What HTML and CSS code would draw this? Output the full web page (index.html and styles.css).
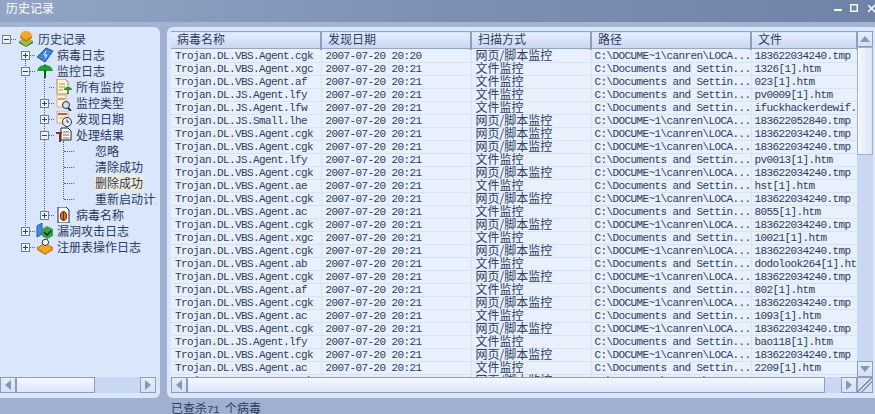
FILE: index.html
```html
<!DOCTYPE html>
<html>
  <head>
    <meta charset="utf-8" />
    <title>历史记录</title>
    <link rel="stylesheet" href="styles.css">
  </head>
  <body>
    <div class="window">
      <div class="titlebar">
        <span class="title">历史记录</span>
        <div class="win-buttons">
          <svg width="8" height="12" viewBox="0 0 8 12"><rect y="8" width="8" height="2" fill="#f4f7fc"/></svg>
          <svg width="8" height="12" viewBox="0 0 8 12"><rect x="0.75" y="3.75" width="6.5" height="6.5" fill="none" stroke="#f4f7fc" stroke-width="1.5"/></svg>
          <svg width="7" height="12" viewBox="0 0 7 12"><path d="M0 4l7 7M7 4l-7 7" stroke="#f4f7fc" stroke-width="1.6"/></svg>
        </div>
      </div>
      <div class="band"></div>
      <div class="main">
        <div class="tree-panel">
          <div class="tree">
            <i class="guide guide-a"></i>
            <i class="guide guide-b"></i>
            <i class="guide guide-c"></i>
            <div class="node"><i class="box minus"></i><i class="dots"></i>
              <svg class="ico" width="18" height="16" viewBox="0 0 18 16"><path d="M2 10l7-4 7 4-7 5z" fill="#8fc24c"/><path d="M2 10v2l7 4 7-4v-2l-7 5z" fill="#3f7a2a"/><path d="M3 5c0-3 3-5 6-5s6 2 6 5l-6 5z" fill="#f5a623"/><path d="M3 5v2l6 4 6-4V5l-6 4z" fill="#d9701a"/></svg>
              <span>历史记录</span></div>
            <div class="node lv1"><i class="box plus"></i><i class="dots"></i>
              <svg class="ico" width="18" height="16" viewBox="0 0 18 16"><path d="M1 10L10 1l7 3-8 11z" fill="#3f86d8" stroke="#1d5aa8"/><path d="M10 4L8 8h3l-2 3" fill="none" stroke="#fff"/></svg>
              <span>病毒日志</span></div>
            <div class="node lv1"><i class="box minus"></i><i class="dots"></i>
              <svg class="ico" width="18" height="16" viewBox="0 0 18 16"><path d="M1 8c1-4 4-6 8-6s7 2 8 6z" fill="#17a02a"/><path d="M9 1v2" stroke="#0a5a12"/><path d="M9 7v8" stroke="#0a5a12" stroke-width="2"/></svg>
              <span>监控日志</span></div>
            <div class="node lv2"><i class="nobox"></i><i class="dots"></i>
              <svg class="ico" width="18" height="16" viewBox="0 0 18 16"><path d="M2 0h8l3 3v12H2z" fill="#fff4d8" stroke="#b08840"/><path d="M4 5h6M4 8h6M4 11h4" stroke="#c08a30"/><path d="M9 11a4 3 0 0 1 8 0z" fill="#17a02a"/><path d="M13 11v4" stroke="#0a5a12"/></svg>
              <span>所有监控</span></div>
            <div class="node lv2"><i class="box plus"></i><i class="dots"></i>
              <svg class="ico" width="18" height="16" viewBox="0 0 18 16"><path d="M2 0h9v12H2z" fill="#fff4e0" stroke="#d8b080"/><path d="M3 4h7" stroke="#e89a50" stroke-width="2"/><circle cx="11" cy="10" r="3.500" fill="#cfe2f6" stroke="#234"/><path d="M13 13l3 3" stroke="#234" stroke-width="2"/></svg>
              <span>监控类型</span></div>
            <div class="node lv2"><i class="box plus"></i><i class="dots"></i>
              <svg class="ico" width="18" height="16" viewBox="0 0 18 16"><path d="M2 0h11v12H2z" fill="#fff4e0" stroke="#d8a080"/><path d="M3 3h9" stroke="#e0503a" stroke-width="2"/><path d="M4 7h7" stroke="#e89a50"/><circle cx="12" cy="11" r="4.500" fill="#e8eef8" stroke="#234"/><path d="M12 8.500V11h2" fill="none" stroke="#234"/></svg>
              <span>发现日期</span></div>
            <div class="node lv2"><i class="box minus"></i><i class="dots"></i>
              <svg class="ico" width="18" height="16" viewBox="0 0 18 16"><path d="M6 1h7l3 3v9H6z" fill="#fff" stroke="#223"/><path d="M8 5h6" stroke="#2a6ad0"/><path d="M8 8h6" stroke="#d03030"/><path d="M8 11h6" stroke="#2a9a40"/><path d="M1 6h6" stroke="#c02020" stroke-width="2"/><path d="M5 5v10" stroke="#803030" stroke-width="2"/></svg>
              <span>处理结果</span></div>
            <div class="node leaf"><i class="dots long"></i><span>忽略</span></div>
            <div class="node leaf"><i class="dots long"></i><span>清除成功</span></div>
            <div class="node leaf"><i class="dots long"></i><span class="selected">删除成功</span></div>
            <div class="node leaf"><i class="dots long"></i><span class="cut">重新启动计划</span></div>
            <div class="node lv2"><i class="box plus"></i><i class="dots"></i>
              <svg class="ico" width="18" height="16" viewBox="0 0 18 16"><path d="M3 0h8l3 3v13H3z" fill="#fff" stroke="#223"/><ellipse cx="8.500" cy="9" rx="3" ry="4.500" fill="#d8761a" stroke="#702010"/><path d="M8.500 5v8" stroke="#702010"/></svg>
              <span>病毒名称</span></div>
            <div class="node lv1"><i class="box plus"></i><i class="dots"></i>
              <svg class="ico" width="18" height="16" viewBox="0 0 18 16"><path d="M1 3l5-3v11l-5 3z" fill="#3f90d8" stroke="#1d5aa8"/><path d="M6 6l5-3 6 3v7l-6 3-5-3z" fill="#3aa048"/><path d="M8 9l3 3 4-4" fill="none" stroke="#123" stroke-width="1.500"/></svg>
              <span>漏洞攻击日志</span></div>
            <div class="node lv1"><i class="box plus"></i><i class="dots"></i>
              <svg class="ico" width="18" height="16" viewBox="0 0 18 16"><path d="M1 9l8-5 8 5-8 6z" fill="#f2a81e" stroke="#a86a10"/><path d="M1 9v2l8 5 8-5V9l-8 6z" fill="#d8861a"/><path d="M7 1l4-1 2 4-4 3-3-3z" fill="#fff" stroke="#334"/></svg>
              <span>注册表操作日志</span></div>
          </div>
          <div class="hscroll tree-hscroll">
            <span class="sb-btn"><i class="arrow-left"></i></span>
            <span class="sb-thumb tree-thumb"></span>
            <span class="sb-track"></span>
            <span class="sb-btn"><i class="arrow-right"></i></span>
          </div>
        </div>
        <div class="list-side">
          <div class="list-panel">
            <div class="list-body">
              <div class="list-view">
                <table class="grid">
                  <colgroup>
                    <col class="c1"><col class="c2"><col class="c3"><col class="c4"><col class="c5">
                  </colgroup>
                  <thead>
                    <tr><th>病毒名称</th><th>发现日期</th><th>扫描方式</th><th>路径</th><th>文件</th></tr>
                  </thead>
                  <tbody>
                    <tr><td>Trojan.DL.VBS.Agent.cgk</td><td>2007-07-20 20:20</td><td>网页/脚本监控</td><td>C:\DOCUME~1\canren\LOCA...</td><td>183622034240.tmp</td></tr>
                    <tr><td>Trojan.DL.VBS.Agent.xgc</td><td>2007-07-20 20:21</td><td>文件监控</td><td>C:\Documents and Settin...</td><td>1326[1].htm</td></tr>
                    <tr><td>Trojan.DL.VBS.Agent.af</td><td>2007-07-20 20:21</td><td>文件监控</td><td>C:\Documents and Settin...</td><td>023[1].htm</td></tr>
                    <tr><td>Trojan.DL.JS.Agent.lfy</td><td>2007-07-20 20:21</td><td>文件监控</td><td>C:\Documents and Settin...</td><td>pv0009[1].htm</td></tr>
                    <tr><td>Trojan.DL.JS.Agent.lfw</td><td>2007-07-20 20:21</td><td>文件监控</td><td>C:\Documents and Settin...</td><td>ifuckhackerdewif.</td></tr>
                    <tr><td>Trojan.DL.JS.Small.lhe</td><td>2007-07-20 20:21</td><td>网页/脚本监控</td><td>C:\DOCUME~1\canren\LOCA...</td><td>183622052840.tmp</td></tr>
                    <tr><td>Trojan.DL.VBS.Agent.cgk</td><td>2007-07-20 20:21</td><td>网页/脚本监控</td><td>C:\DOCUME~1\canren\LOCA...</td><td>183622034240.tmp</td></tr>
                    <tr><td>Trojan.DL.VBS.Agent.cgk</td><td>2007-07-20 20:21</td><td>网页/脚本监控</td><td>C:\DOCUME~1\canren\LOCA...</td><td>183622034240.tmp</td></tr>
                    <tr><td>Trojan.DL.JS.Agent.lfy</td><td>2007-07-20 20:21</td><td>文件监控</td><td>C:\Documents and Settin...</td><td>pv0013[1].htm</td></tr>
                    <tr><td>Trojan.DL.VBS.Agent.cgk</td><td>2007-07-20 20:21</td><td>网页/脚本监控</td><td>C:\DOCUME~1\canren\LOCA...</td><td>183622034240.tmp</td></tr>
                    <tr><td>Trojan.DL.VBS.Agent.ae</td><td>2007-07-20 20:21</td><td>文件监控</td><td>C:\Documents and Settin...</td><td>hst[1].htm</td></tr>
                    <tr><td>Trojan.DL.VBS.Agent.cgk</td><td>2007-07-20 20:21</td><td>网页/脚本监控</td><td>C:\DOCUME~1\canren\LOCA...</td><td>183622034240.tmp</td></tr>
                    <tr><td>Trojan.DL.VBS.Agent.ac</td><td>2007-07-20 20:21</td><td>文件监控</td><td>C:\Documents and Settin...</td><td>8055[1].htm</td></tr>
                    <tr><td>Trojan.DL.VBS.Agent.cgk</td><td>2007-07-20 20:21</td><td>网页/脚本监控</td><td>C:\DOCUME~1\canren\LOCA...</td><td>183622034240.tmp</td></tr>
                    <tr><td>Trojan.DL.VBS.Agent.xgc</td><td>2007-07-20 20:21</td><td>文件监控</td><td>C:\Documents and Settin...</td><td>10021[1].htm</td></tr>
                    <tr><td>Trojan.DL.VBS.Agent.cgk</td><td>2007-07-20 20:21</td><td>网页/脚本监控</td><td>C:\DOCUME~1\canren\LOCA...</td><td>183622034240.tmp</td></tr>
                    <tr><td>Trojan.DL.VBS.Agent.ab</td><td>2007-07-20 20:21</td><td>文件监控</td><td>C:\Documents and Settin...</td><td>dodolook264[1].ht</td></tr>
                    <tr><td>Trojan.DL.VBS.Agent.cgk</td><td>2007-07-20 20:21</td><td>网页/脚本监控</td><td>C:\DOCUME~1\canren\LOCA...</td><td>183622034240.tmp</td></tr>
                    <tr><td>Trojan.DL.VBS.Agent.af</td><td>2007-07-20 20:21</td><td>文件监控</td><td>C:\Documents and Settin...</td><td>802[1].htm</td></tr>
                    <tr><td>Trojan.DL.VBS.Agent.cgk</td><td>2007-07-20 20:21</td><td>网页/脚本监控</td><td>C:\DOCUME~1\canren\LOCA...</td><td>183622034240.tmp</td></tr>
                    <tr><td>Trojan.DL.VBS.Agent.ac</td><td>2007-07-20 20:21</td><td>文件监控</td><td>C:\Documents and Settin...</td><td>1093[1].htm</td></tr>
                    <tr><td>Trojan.DL.VBS.Agent.cgk</td><td>2007-07-20 20:21</td><td>网页/脚本监控</td><td>C:\DOCUME~1\canren\LOCA...</td><td>183622034240.tmp</td></tr>
                    <tr><td>Trojan.DL.JS.Agent.lfy</td><td>2007-07-20 20:21</td><td>文件监控</td><td>C:\Documents and Settin...</td><td>bao118[1].htm</td></tr>
                    <tr><td>Trojan.DL.VBS.Agent.cgk</td><td>2007-07-20 20:21</td><td>网页/脚本监控</td><td>C:\DOCUME~1\canren\LOCA...</td><td>183622034240.tmp</td></tr>
                    <tr><td>Trojan.DL.VBS.Agent.ac</td><td>2007-07-20 20:21</td><td>文件监控</td><td>C:\Documents and Settin...</td><td>2209[1].htm</td></tr>
                    <tr><td>Trojan.DL.VBS.Agent.cgk</td><td>2007-07-20 20:21</td><td>网页/脚本监控</td><td>C:\DOCUME~1\canren\LOCA...</td><td>183622034240.tmp</td></tr>
                  </tbody>
                </table>
              </div>
              <div class="vscroll">
                <span class="sb-btn"><i class="arrow-up"></i></span>
                <span class="v-thumb"></span>
                <span class="v-track"></span>
                <span class="sb-btn"><i class="arrow-down"></i></span>
              </div>
            </div>
            <div class="hscroll list-hscroll">
              <span class="sb-btn"><i class="arrow-left"></i></span>
              <span class="sb-thumb list-thumb"></span>
              <span class="sb-track"></span>
              <span class="sb-btn"><i class="arrow-right"></i></span>
              <span class="sb-btn grip"></span>
            </div>
          </div>
          <div class="status">已查杀<span class="num">71 </span>个病毒</div>
        </div>
      </div>
    </div>
  </body>
</html>
```

FILE: styles.css
```css
* {
  box-sizing: border-box;
  margin: 0;
  padding: 0;
}
html,
body {
  width: 875px;
  height: 414px;
  overflow: hidden;
}
body {
  background: #a0b0d0;
  font-family: "Noto Sans CJK SC", sans-serif;
  font-size: 12px;
  color: #2b3c5e;
}
.window {
  display: flex;
  flex-direction: column;
  height: 414px;
}

/* title bar */
.titlebar {
  display: flex;
  flex: none;
  justify-content: space-between;
  align-items: center;
  height: 22px;
  padding-left: 6px;
  background: linear-gradient(90deg, #93a5c6, #7c90b4 50%, #6f83a8);
}
.title {
  color: #fff;
  font-size: 12px;
  line-height: 16px;
  margin-top: -7px;
}
.win-buttons {
  display: flex;
  margin-top: -8px;
}
.win-buttons svg:nth-child(2) {
  margin: 0 10px 0 8px;
}
.band {
  flex: none;
  height: 5px;
  background: #a3b4d3;
}

/* panels */
.main {
  display: flex;
  flex: none;
  height: 387px;
  gap: 7px;
}
.tree-panel {
  display: flex;
  flex: none;
  flex-direction: column;
  width: 160px;
  height: 371px;
  background: #d9e6fb;
  border-radius: 0 6px 6px 0;
}
.list-side {
  flex: 1;
  display: flex;
  flex-direction: column;
}
.list-panel {
  flex: none;
  height: 371px;
  padding: 4px 2px 0 4px;
  background: #d9e6fb;
  border-radius: 6px 0 0 6px;
}
.list-body {
  display: flex;
  height: 346px;
}
.list-view {
  width: 686px;
  height: 346px;
  overflow: hidden;
  background: #e8f0fc;
}
.status {
  padding: 2px 0 0 4px;
  font-size: 12px;
  line-height: 16px;
  color: #2b3c5e;
}
.num {
  font-family: "Liberation Mono", monospace;
  font-size: 11px;
  letter-spacing: -0.6px;
  white-space: pre;
}

/* tree */
.tree {
  flex: 1;
  position: relative;
  padding-top: 4px;
}
.guide {
  position: absolute;
  width: 0;
  border-left: 1px dotted #55657f;
}
.guide-a {
  left: 25px;
  top: 33px;
  height: 172px;
}
.guide-b {
  left: 44px;
  top: 49px;
  height: 139px;
}
.guide-c {
  left: 63px;
  top: 114px;
  height: 58px;
}
.node {
  display: flex;
  align-items: center;
  height: 16px;
  padding-left: 2px;
  white-space: nowrap;
}
.lv1 {
  padding-left: 21px;
}
.lv2 {
  padding-left: 40px;
}
.leaf {
  padding-left: 64px;
}
.node > span {
  margin-left: 3px;
  line-height: 16px;
  color: #2b3c5e;
}
.node.leaf > span {
  margin-left: 20px;
  padding: 0 1px;
}
.ico {
  flex: none;
  margin-left: 1px;
}
.box {
  flex: none;
  position: relative;
  width: 9px;
  height: 9px;
  background: #eef4fd;
  border: 1px solid #6d7f9c;
}
.box::before {
  content: "";
  position: absolute;
  left: 1px;
  top: 3px;
  width: 5px;
  height: 1px;
  background: #33435f;
}
.plus::after {
  content: "";
  position: absolute;
  left: 3px;
  top: 1px;
  width: 1px;
  height: 5px;
  background: #33435f;
}
.nobox {
  flex: none;
  width: 9px;
}
.dots {
  flex: none;
  width: 5px;
  border-top: 1px dotted #55657f;
}
.dots.long {
  width: 10px;
}
.node > .selected {
  background: #f2ecd6;
}
.node > .cut {
  display: block;
  width: 62px;
  overflow: hidden;
}

/* scroll bars */
.hscroll {
  display: flex;
  flex: none;
  height: 16px;
  background: #c8d8f2;
}
.tree-hscroll {
  width: 156px;
  margin-bottom: 5px;
}
.sb-btn {
  flex: none;
  display: flex;
  align-items: center;
  justify-content: center;
  width: 16px;
  height: 16px;
  background: linear-gradient(#e6eefb, #d3e0f5);
  border: 1px solid #8e9db8;
}
.sb-thumb {
  flex: none;
  height: 16px;
  background: linear-gradient(#f6f9fe, #dbe6f8);
  border: 1px solid #8e9db8;
}
.tree-thumb {
  width: 79px;
}
.list-thumb {
  width: 638px;
}
.sb-track {
  flex: 1;
}
.grip {
  background: linear-gradient(135deg, #d3e0f5 45%, #7f8fa9 46%, #7f8fa9 50%, #d3e0f5 51%, #d3e0f5 60%, #7f8fa9 61%, #7f8fa9 65%, #d3e0f5 66%);
}
.arrow-left,
.arrow-right {
  width: 0;
  height: 0;
  border-top: 5px solid transparent;
  border-bottom: 5px solid transparent;
}
.arrow-left {
  border-right: 6px solid #8897b2;
}
.arrow-right {
  border-left: 6px solid #8897b2;
}
.arrow-up,
.arrow-down {
  width: 0;
  height: 0;
  border-left: 5px solid transparent;
  border-right: 5px solid transparent;
}
.arrow-up {
  border-bottom: 6px solid #8897b2;
}
.arrow-down {
  border-top: 6px solid #8897b2;
}
.vscroll {
  display: flex;
  flex-direction: column;
  flex: none;
  width: 16px;
  height: 346px;
  background: #c8d8f2;
}
.v-thumb {
  flex: none;
  height: 108px;
  background: linear-gradient(90deg, #f6f9fe, #dbe6f8);
  border: 1px solid #a3b1c9;
}
.v-track {
  flex: 1;
}

/* list */
.grid {
  table-layout: fixed;
  width: 686px;
  border-collapse: collapse;
}
.c1,
.c2 {
  width: 150px;
}
.c3 {
  width: 120px;
}
.c4 {
  width: 160px;
}
.c5 {
  width: 106px;
}
.grid th {
  height: 18px;
  padding: 0 0 3px 6px;
  text-align: left;
  font-weight: normal;
  font-size: 12px;
  line-height: 14px;
  color: #2b3c5e;
  background: linear-gradient(#e6eefc, #c6d6f2);
  border-top: 1px solid #95a6c4;
  border-bottom: 1px solid #e8f0fc;
  border-right: 2px solid #8fa0bf;
  box-shadow: inset 0 -1px #95a6c4;
}
.grid td {
  height: 13px;
  padding: 0 0 0 3px;
  white-space: nowrap;
  font-family: "Liberation Mono", monospace;
  font-size: 11px;
  letter-spacing: -0.6px;
  line-height: 12px;
  color: #2b3c5e;
  border-bottom: 1px solid #d6e2f6;
  border-right: 1px solid #d6e2f6;
}
.grid td:nth-child(-n+3) {
  padding-left: 4px;
}
.grid td:nth-child(3) {
  padding-bottom: 2px;
  font-family: "Noto Sans CJK SC", sans-serif;
  font-size: 12px;
  letter-spacing: 0;
  line-height: 10px;
}
```
